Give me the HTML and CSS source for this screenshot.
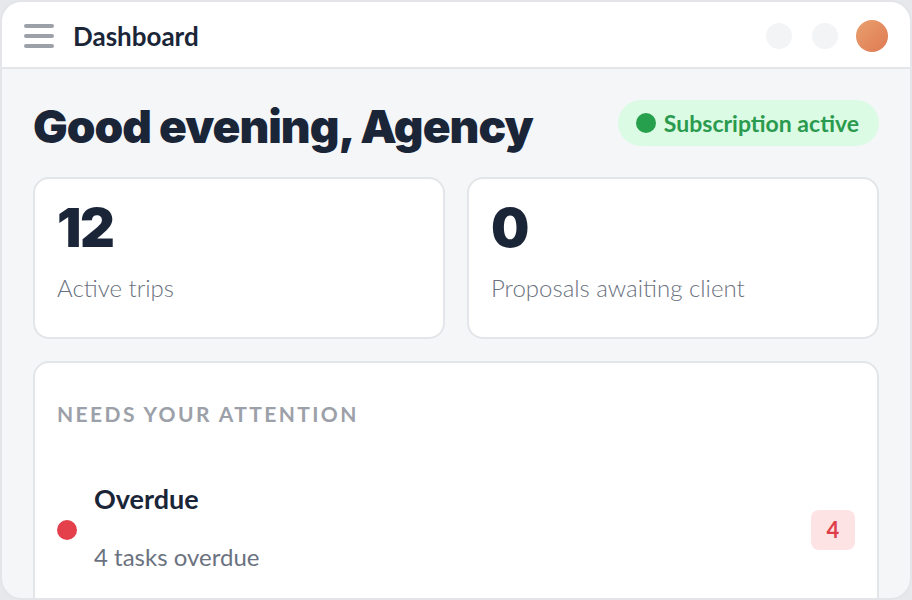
FILE: index.html
```html
<!DOCTYPE html>
<html>
<head>
<meta charset="utf-8">
<link rel="stylesheet" href="styles.css">
</head>
<body>
<div class="frame">
  <header class="topbar">
    <div class="menu"><span></span><span></span><span></span></div>
    <div class="title">Dashboard</div>
    <div class="actions">
      <span class="ghost"></span>
      <span class="ghost second"></span>
      <span class="avatar"></span>
    </div>
  </header>
  <main class="content">
    <div class="greet-row">
      <h1 class="greet">Good evening, Agency</h1>
      <div class="pill"><span class="pill-dot"></span>Subscription active</div>
    </div>
    <div class="stats">
      <div class="card stat">
        <div class="num">12</div>
        <div class="label">Active trips</div>
      </div>
      <div class="card stat">
        <div class="num">0</div>
        <div class="label">Proposals awaiting client</div>
      </div>
    </div>
    <div class="card attention">
      <div class="section-title">NEEDS YOUR ATTENTION</div>
      <div class="item">
        <span class="red-dot"></span>
        <div class="item-text">
          <div class="item-name">Overdue</div>
          <div class="item-sub">4 tasks overdue</div>
        </div>
        <span class="count">4</span>
      </div>
    </div>
  </main>
</div>
</body>
</html>
```
FILE: styles.css
```css
* { box-sizing: border-box; }
html, body { margin: 0; padding: 0; }
body {
  background: #e6e8eb;
  font-family: "Lato", "Noto Sans", sans-serif;
  width: 912px;
  height: 600px;
  overflow: hidden;
}
.frame {
  width: 912px;
  height: 600px;
  border: 2px solid #e3e5e8;
  border-radius: 22px;
  background: #f4f6f8;
  overflow: hidden;
  display: flex;
  flex-direction: column;
}
.topbar {
  height: 67px;
  flex: none;
  background: #fff;
  border-bottom: 2px solid #e3e5e8;
  display: flex;
  align-items: center;
  padding: 2px 22px 0 22px;
}
.menu {
  width: 30px;
  display: flex;
  flex-direction: column;
  gap: 6px;
}
.menu span {
  display: block;
  height: 4px;
  border-radius: 2px;
  background: #9ca0a8;
}
.title {
  margin-left: 19px;
  font-weight: 700;
  font-size: 26px;
  color: #1b2538;
}
.actions {
  margin-left: auto;
  display: flex;
  align-items: center;
}
.ghost {
  width: 26px;
  height: 26px;
  border-radius: 50%;
  background: #f3f4f6;
}
.ghost.second { margin-left: 20px; }
.avatar {
  margin-left: 18px;
  width: 32px;
  height: 32px;
  border-radius: 50%;
  background: linear-gradient(135deg, #eaa06e, #de7a52);
}
.content {
  padding: 30px 31px 0 31px;
  display: flex;
  flex-direction: column;
  gap: 22px;
}
.greet-row {
  display: flex;
  align-items: center;
  justify-content: space-between;
  height: 48px;
  margin-bottom: 8px;
}
.greet {
  margin: 0;
  padding-top: 6px;
  font-family: "Inter", sans-serif;
  font-weight: 900;
  font-size: 46px;
  line-height: 48px;
  letter-spacing: -1px;
  color: #1b2538;
}
.pill {
  display: flex;
  align-items: center;
  gap: 8px;
  height: 46px;
  padding: 0 20px 0 18px;
  border-radius: 23px;
  background: #dcfbe4;
  color: #2a9a4e;
  font-weight: 700;
  font-size: 23px;
}
.pill-dot {
  width: 20px;
  height: 20px;
  border-radius: 50%;
  background: #26a04c;
}
.stats {
  display: grid;
  grid-template-columns: 1fr 1fr;
  gap: 22px;
}
.card {
  background: #fff;
  border: 2px solid #e3e5e8;
  border-radius: 16px;
}
.stat {
  height: 162px;
  padding: 17px 22px 0 22px;
}
.num {
  font-family: "Inter", sans-serif;
  font-weight: 900;
  font-size: 54px;
  letter-spacing: -1.5px;
  line-height: 64px;
  color: #1b2538;
}
.label {
  margin-top: 13px;
  font-size: 24px;
  font-weight: 300;
  color: #6b7280;
}
.attention {
  height: 260px;
  padding: 38px 22px 0 22px;
}
.section-title {
  font-size: 21px;
  font-weight: 700;
  letter-spacing: 2.4px;
  color: #9ca0a8;
}
.item {
  display: flex;
  align-items: center;
  margin-top: 57px;
}
.red-dot {
  width: 20px;
  height: 20px;
  border-radius: 50%;
  background: #e3404c;
  flex: none;
}
.item-text {
  margin-left: 17px;
  padding-bottom: 5px;
  display: flex;
  flex-direction: column;
  gap: 28px;
}
.item-name {
  font-size: 27px;
  line-height: 32px;
  font-weight: 700;
  color: #1b2538;
}
.item-sub {
  font-size: 24px;
  line-height: 28px;
  font-weight: 400;
  color: #6b7280;
}
.count {
  margin-left: auto;
  width: 44px;
  height: 40px;
  border-radius: 8px;
  background: #fde3e3;
  color: #df3d4a;
  font-weight: 700;
  font-size: 22px;
  display: flex;
  align-items: center;
  justify-content: center;
}
```
